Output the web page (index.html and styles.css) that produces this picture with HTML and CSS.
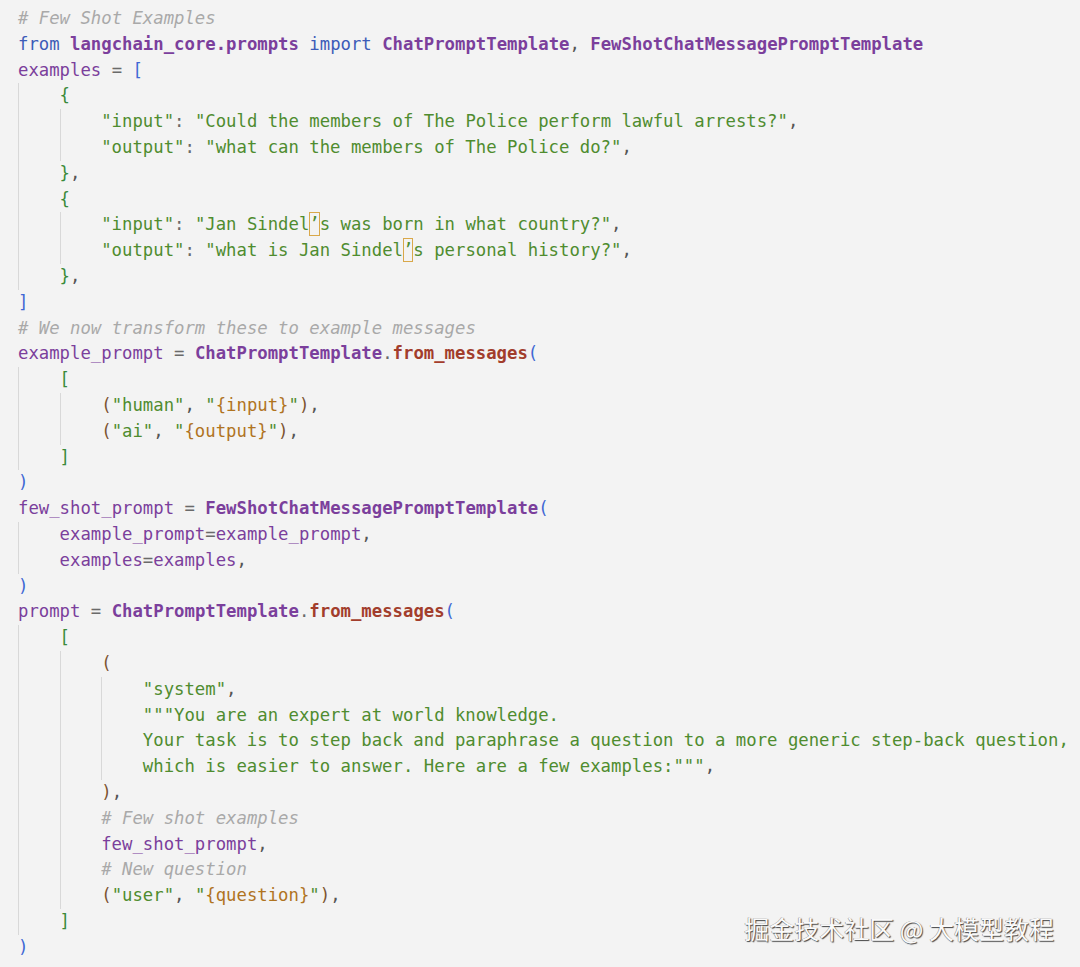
FILE: index.html
```html
<!DOCTYPE html>
<html lang="en">
<head>
<meta charset="utf-8">
<title>Few Shot Examples</title>
<link rel="stylesheet" href="styles.css">
</head>
<body>
<div class="page">
<pre class="code"><div class="ln"><span class="cm"># Few Shot Examples</span></div><div class="ln"><span class="kw">from</span> <span class="idb">langchain_core.prompts</span> <span class="kw">import</span> <span class="idb">ChatPromptTemplate</span><span class="p">, </span><span class="idb">FewShotChatMessagePromptTemplate</span></div><div class="ln"><span class="id">examples</span> <span class="op">=</span> <span class="b1">[</span></div><div class="blk"><div class="ln"><span class="b2">{</span></div><div class="blk"><div class="ln"><span class="st">"input"</span><span class="op">: </span><span class="st">"Could the members of The Police perform lawful arrests?"</span><span class="p">,</span></div><div class="ln"><span class="st">"output"</span><span class="op">: </span><span class="st">"what can the members of The Police do?"</span><span class="p">,</span></div></div><div class="ln"><span class="b2">}</span><span class="p">,</span></div><div class="ln"><span class="b2">{</span></div><div class="blk"><div class="ln"><span class="st">"input"</span><span class="op">: </span><span class="st">"Jan Sindel<span class="uni">’</span>s was born in what country?"</span><span class="p">,</span></div><div class="ln"><span class="st">"output"</span><span class="op">: </span><span class="st">"what is Jan Sindel<span class="uni">’</span>s personal history?"</span><span class="p">,</span></div></div><div class="ln"><span class="b2">}</span><span class="p">,</span></div></div><div class="ln"><span class="b1">]</span></div><div class="ln"><span class="cm"># We now transform these to example messages</span></div><div class="ln"><span class="id">example_prompt</span> <span class="op">=</span> <span class="idb">ChatPromptTemplate</span><span class="op">.</span><span class="fn">from_messages</span><span class="b1">(</span></div><div class="blk"><div class="ln"><span class="b2">[</span></div><div class="blk"><div class="ln"><span class="b3">(</span><span class="st">"human"</span><span class="p">, </span><span class="st">"</span><span class="in">{input}</span><span class="st">"</span><span class="b3">)</span><span class="p">,</span></div><div class="ln"><span class="b3">(</span><span class="st">"ai"</span><span class="p">, </span><span class="st">"</span><span class="in">{output}</span><span class="st">"</span><span class="b3">)</span><span class="p">,</span></div></div><div class="ln"><span class="b2">]</span></div></div><div class="ln"><span class="b1">)</span></div><div class="ln"><span class="id">few_shot_prompt</span> <span class="op">=</span> <span class="idb">FewShotChatMessagePromptTemplate</span><span class="b1">(</span></div><div class="blk"><div class="ln"><span class="id">example_prompt</span><span class="op">=</span><span class="id">example_prompt</span><span class="p">,</span></div><div class="ln"><span class="id">examples</span><span class="op">=</span><span class="id">examples</span><span class="p">,</span></div></div><div class="ln"><span class="b1">)</span></div><div class="ln"><span class="id">prompt</span> <span class="op">=</span> <span class="idb">ChatPromptTemplate</span><span class="op">.</span><span class="fn">from_messages</span><span class="b1">(</span></div><div class="blk"><div class="ln"><span class="b2">[</span></div><div class="blk"><div class="ln"><span class="b3">(</span></div><div class="blk"><div class="ln"><span class="st">"system"</span><span class="p">,</span></div><div class="ln"><span class="st">"""You are an expert at world knowledge.</span></div><div class="ln"><span class="st">Your task is to step back and paraphrase a question to a more generic step-back question,</span></div><div class="ln"><span class="st">which is easier to answer. Here are a few examples:"""</span><span class="p">,</span></div></div><div class="ln"><span class="b3">)</span><span class="p">,</span></div><div class="ln"><span class="cm"># Few shot examples</span></div><div class="ln"><span class="id">few_shot_prompt</span><span class="p">,</span></div><div class="ln"><span class="cm"># New question</span></div><div class="ln"><span class="b3">(</span><span class="st">"user"</span><span class="p">, </span><span class="st">"</span><span class="in">{question}</span><span class="st">"</span><span class="b3">)</span><span class="p">,</span></div></div><div class="ln"><span class="b2">]</span></div></div><div class="ln"><span class="b1">)</span></div></pre>
<div class="mark">掘金技术社区 @ 大模型教程</div>
</div>
</body>
</html>
```

FILE: styles.css
```css
html, body {
  margin: 0;
  padding: 0;
  background: #f3f3f3;
}
.page {
  position: relative;
  width: 1080px;
  height: 967px;
  overflow: hidden;
  background: #f3f3f3;
}
.code {
  margin: 0;
  padding: 6px 0 0 18px;
  font-family: "DejaVu Sans Mono", "Liberation Mono", monospace;
  font-size: 17.3px;
  line-height: 25.8px;
  color: #555;
  white-space: pre;
}
.ln {
  height: 25.8px;
}
.blk {
  border-left: 1px solid #d8d8d8;
  padding-left: calc(4ch - 1px);
}
.cm { color: #a9a9a9; font-style: italic; }
.kw { color: #3d5cb8; }
.id { color: #7b3f9c; }
.idb { color: #7b3f9c; font-weight: bold; }
.fn { color: #a23d2c; font-weight: bold; }
.st { color: #4f8c2f; }
.in { color: #b0741f; }
.op { color: #6a6a6a; }
.p { color: #555; }
.b1 { color: #3f67d4; }
.b2 { color: #3a8a3a; }
.b3 { color: #7c5330; }
.uni {
  box-shadow: inset 0 0 0 1px #d9a84a;
  padding: 2px 0;
}
.mark {
  position: absolute;
  right: 26px;
  bottom: 25px;
  font-family: "Noto Sans CJK SC", sans-serif;
  font-size: 25px;
  line-height: 28px;
  color: #fafafa;
  text-shadow: 1px 1px 1px #444, -0.5px -0.5px 0 #888;
  white-space: nowrap;
}
```
